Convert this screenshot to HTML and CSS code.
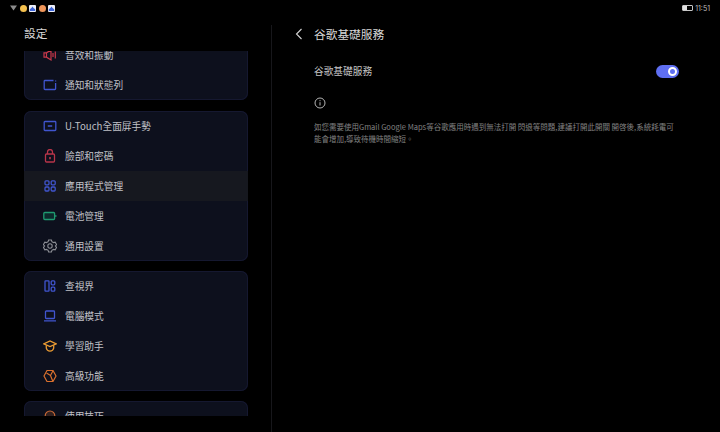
FILE: index.html
```html
<!DOCTYPE html>
<html lang="zh-Hant">
<head>
  <meta charset="UTF-8" />
  <title>設定</title>
  <link rel="stylesheet" href="styles.css">
</head>
<body>
  <div class="statusbar">
    <div class="status-left">
      <svg class="wifi" width="7" height="6" viewBox="0 0 7 6"><path d="M0 0.500h7L3.500 5.500z" fill="#8c8c8c"/></svg>
      <span class="dot yellow"></span>
      <span class="app"><svg width="7" height="7" viewBox="0 0 7 7"><path d="M0.800 6V4.200L2.400 3 3.500 1.500 4.600 3 6.200 4.200V6z" fill="#3f66d8"/></svg></span>
      <span class="dot orange"></span>
      <span class="app"><svg width="7" height="7" viewBox="0 0 7 7"><path d="M0.800 6V4.200L2.400 3 3.500 1.500 4.600 3 6.200 4.200V6z" fill="#3f66d8"/></svg></span>
    </div>
    <div class="status-right">
      <span class="battery"><span class="battery-level"></span></span>
      <span class="clock">11:51</span>
    </div>
  </div>

  <div class="main">
    <aside class="sidebar">
      <h1 class="side-title">設定</h1>
      <div class="side-list">
        <div class="card card-first">
          <div class="row">
            <svg class="icon" viewBox="0 0 14 14" fill="none" stroke="#c9384a" stroke-width="1.200"><path d="M1 4.800h2.500L8 2v10L3.500 9.200H1zM3.500 4.800v4.400"/><path d="M10 5v4M12.300 3.500v7"/></svg>
            <span>音效和振動</span>
          </div>
          <div class="row">
            <svg class="icon" viewBox="0 0 14 14" fill="none" stroke="#4055cf" stroke-width="1.300"><path d="M10.500 2.500H2a.8.8 0 0 0-.8.8v7.400a.8.8 0 0 0 .8.8h9.800a.8.8 0 0 0 .8-.8V5"/><path d="M12.600 2.500v1"/></svg>
            <span>通知和狀態列</span>
          </div>
        </div>

        <div class="card">
          <div class="row">
            <svg class="icon" viewBox="0 0 14 14" fill="none" stroke="#4055cf" stroke-width="1.300"><rect x="1.200" y="2.500" width="11.600" height="9" rx=".8"/><path d="M4.800 7h4.400"/></svg>
            <span>U-Touch全面屏手勢</span>
          </div>
          <div class="row">
            <svg class="icon" viewBox="0 0 14 14" fill="none" stroke="#b8354a" stroke-width="1.300"><rect x="2.500" y="5" width="9" height="8" rx="1"/><path d="M4.500 5V3a2.500 2.500 0 0 1 5 0v2"/><path d="M7 8v2.200" stroke-width="1.600"/></svg>
            <span>臉部和密碼</span>
          </div>
          <div class="row row-active">
            <svg class="icon" viewBox="0 0 14 14" fill="none" stroke="#4055cf" stroke-width="1.300"><rect x="2" y="1.800" width="4" height="4" rx="1"/><rect x="8.200" y="1.800" width="4" height="4" rx="1"/><rect x="2" y="8" width="4" height="4" rx="1"/><rect x="8.200" y="8" width="4" height="4" rx="1"/></svg>
            <span>應用程式管理</span>
          </div>
          <div class="row">
            <svg class="icon" viewBox="0 0 14 14" fill="#0d2a2c" stroke="#1f9a70" stroke-width="1.300"><rect x=".8" y="3.500" width="10.800" height="7" rx="1"/><path d="M12.800 6.200v1.600" stroke-width="1.400"/></svg>
            <span>電池管理</span>
          </div>
          <div class="row">
            <svg class="icon" viewBox="0 0 14 14" fill="none" stroke="#8b8d94" stroke-width="1.100"><path d="M5.600 1h2.800l.5 1.700 1.600.9 1.700-.4 1.400 2.400L12.400 7l1.200 1.400-1.400 2.400-1.700-.4-1.600.9L8.400 13H5.600l-.5-1.700-1.600-.9-1.700.4L.4 8.400 1.600 7 .4 5.600l1.400-2.400 1.700.4 1.600-.9z"/><circle cx="7" cy="7" r="2.200"/></svg>
            <span>通用設置</span>
          </div>
        </div>

        <div class="card">
          <div class="row">
            <svg class="icon" viewBox="0 0 14 14" fill="none" stroke="#4055cf" stroke-width="1.300"><rect x="2" y="1.800" width="4" height="10.400" rx=".6"/><rect x="8.200" y="1.800" width="3.600" height="4" rx="1"/><rect x="8.200" y="8.200" width="3.600" height="4" rx="1"/></svg>
            <span>查視界</span>
          </div>
          <div class="row">
            <svg class="icon" viewBox="0 0 14 14" fill="none" stroke="#4055cf" stroke-width="1.300"><rect x="2.500" y="2" width="9" height="7.500" rx=".8"/><path d="M1 11.800h12"/></svg>
            <span>電腦模式</span>
          </div>
          <div class="row">
            <svg class="icon" viewBox="0 0 14 14" fill="none" stroke="#e89a32" stroke-width="1.300"><path d="M.8 4.800L7 2l6.200 2.800L7 7.600z"/><path d="M3.300 6.200v3C3.800 11.200 5.400 12.200 7 12.200s3.200-1 3.700-3V6.200"/></svg>
            <span>學習助手</span>
          </div>
          <div class="row">
            <svg class="icon" viewBox="0 0 14 14" fill="none" stroke="#d9702e" stroke-width="1.200"><path d="M4 1.500h6L13 7l-3 5.500H4L1 7z"/><path d="M3.500 4L7.500 6.500 10 1.800M7.500 6.500L9.800 12.300"/></svg>
            <span>高級功能</span>
          </div>
        </div>

        <div class="card">
          <div class="row">
            <svg class="icon" viewBox="0 0 14 14" fill="#33211f" stroke="#c96a36" stroke-width="1.200"><circle cx="7" cy="6.800" r="4.800"/></svg>
            <span>使用技巧</span>
          </div>
        </div>
      </div>
    </aside>
    <div class="divider"></div>

    <section class="detail">
      <header class="detail-head">
        <svg class="back" width="8" height="12" viewBox="0 0 8 12" fill="none" stroke="#d4d4d4" stroke-width="1.100"><path d="M6.500 1L1.500 6l5 5"/></svg>
        <h2 class="detail-title">谷歌基礎服務</h2>
      </header>
      <div class="setting">
        <span>谷歌基礎服務</span>
        <span class="toggle"><span class="knob"></span></span>
      </div>
      <svg class="info" width="12" height="12" viewBox="0 0 12 12" fill="none" stroke="#b5b5b5"><circle cx="6" cy="6" r="5"/><path d="M6 5.200v3.300M6 3.200v1"/></svg>
      <p class="desc">如您需要使用Gmail Google Maps等谷歌應用時遇到無法打開 閃退等問題,建議打開此開關 開啓後,系統耗電可能會增加,導致待機時間縮短。</p>
    </section>
  </div>
</body>
</html>
```

FILE: styles.css
```css
* {
  box-sizing: border-box;
}

html, body {
  margin: 0;
  padding: 0;
}

body {
  width: 720px;
  height: 432px;
  overflow: hidden;
  background: #000;
  color: #c4c5c9;
  font-family: "Noto Sans CJK TC", Inter, sans-serif;
}

.statusbar {
  height: 16px;
  display: flex;
  justify-content: space-between;
  align-items: center;
  padding: 0 10px;
}

.status-left {
  display: flex;
  align-items: center;
  gap: 2.5px;
}

.dot {
  width: 7px;
  height: 7px;
  border-radius: 50%;
}

.yellow {
  background: #f4c04e;
}

.orange {
  background: #f0965a;
}

.app {
  width: 7px;
  height: 7px;
  background: #eef0fa;
  border-radius: 1px;
  display: flex;
}

.status-right {
  display: flex;
  align-items: center;
  gap: 2px;
}

.battery {
  width: 11px;
  height: 6px;
  border: 1px solid #c8c8c8;
  border-radius: 1px;
  display: flex;
}

.battery-level {
  width: 4px;
  background: #e0e0e0;
}

.clock {
  font-family: Inter, sans-serif;
  font-size: 7px;
  color: #bdbdbd;
}

.main {
  display: flex;
  height: 416px;
}

.sidebar {
  width: 271px;
  height: 400px;
  display: flex;
  flex-direction: column;
}

.divider {
  width: 1px;
  margin-top: 9px;
  background: #17171b;
}

.side-title {
  margin: 0;
  height: 35px;
  padding: 8px 0 0 24px;
  font-size: 11.7px;
  line-height: 18px;
  font-weight: 400;
  color: #d6d6d6;
}

.side-list {
  flex: 1;
  min-height: 0;
  overflow: hidden;
  padding: 0 24px;
}

.card {
  width: 224px;
  margin-bottom: 10px;
  background: #0d101d;
  box-shadow: inset 0 0 0 1px #151830;
  border-radius: 7px;
  overflow: hidden;
}

.card-first {
  margin-top: -11px;
  margin-bottom: 11px;
}

.row {
  height: 30px;
  display: flex;
  align-items: center;
  gap: 8px;
  padding-left: 19px;
  font-size: 9.7px;
  color: #c0c1c7;
}

.row-active {
  background: #16181f;
}

.icon {
  width: 14px;
  height: 14px;
  flex: none;
}

.detail {
  flex: 1;
  padding: 0 41px 0 23px;
}

.detail-head {
  display: flex;
  align-items: center;
  gap: 11px;
  height: 36px;
  padding-bottom: 1px;
}

.back {
  flex: none;
}

.detail-title {
  margin: 0;
  font-size: 11.7px;
  font-weight: 400;
  color: #d6d6d6;
}

.setting {
  margin: 4px 0 0 19px;
  height: 30px;
  display: flex;
  justify-content: space-between;
  align-items: center;
  font-size: 9.7px;
  color: #c4c4c4;
}

.toggle {
  width: 23px;
  height: 13px;
  border-radius: 7px;
  background: #5f6ff2;
  display: flex;
  justify-content: flex-end;
  align-items: center;
  padding-right: 2px;
}

.knob {
  width: 9px;
  height: 9px;
  border-radius: 50%;
  border: 2.5px solid #fff;
  background: #5f6ff2;
}

.info {
  display: block;
  margin: 11px 0 0 19px;
}

.desc {
  margin: 12px 4px 0 19px;
  font-size: 7.5px;
  line-height: 12px;
  color: #828282;
}
```
